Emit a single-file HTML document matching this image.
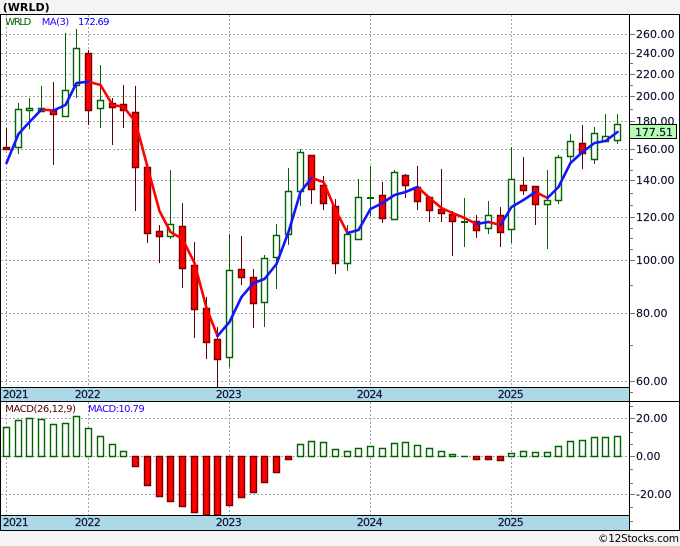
<!DOCTYPE html>
<html><head><meta charset="utf-8"><title>WRLD</title>
<style>
html,body{margin:0;padding:0;background:#f4f4f4;width:680px;height:546px;overflow:hidden}
svg{display:block}
text{font-family:"DejaVu Sans","Liberation Sans",sans-serif;font-size:11px;fill:#0b1030;stroke:#0b1030;stroke-width:.15}
</style></head><body>
<svg width="680" height="546" viewBox="0 0 680 546" xmlns="http://www.w3.org/2000/svg">
<rect x="0" y="0" width="680" height="546" fill="#f4f4f4"/>
<rect x="0.5" y="14.5" width="679" height="516" fill="#fff"/>
<rect x="1" y="388" width="628" height="13" fill="#add8e6"/>
<rect x="1" y="516" width="628" height="14" fill="#add8e6"/>
<g shape-rendering="crispEdges">
<path fill="none" stroke="#a4a4a4" stroke-width="1" stroke-dasharray="2 2" d="M1 34.5H629M1 53.5H629M1 74.5H629M1 96.5H629M1 121.5H629M1 149.5H629M1 180.5H629M1 217.5H629M1 260.5H629M1 313.5H629M1 381.5H629M1 418.5H629M1 456.5H629M1 494.5H629M6.5 15V387M88.5 15V387M229.5 15V387M370.5 15V387M511.5 15V387M6.5 402V515M88.5 402V515M229.5 402V515M370.5 402V515M511.5 402V515"/>
<path fill="none" stroke="#777" stroke-width="1" d="M630 34.5H635M630 53.5H635M630 74.5H635M630 96.5H635M630 121.5H635M630 149.5H635M630 180.5H635M630 217.5H635M630 260.5H635M630 313.5H635M630 381.5H635M630 63.5H633M630 85.5H633M630 109.5H633M630 135.5H633M630 159.5H633M630 170.5H633M630 193.5H633M630 205.5H633M630 228.5H633M630 238.5H633M630 249.5H633M630 285.5H633M630 345.5H633M630 392.5H633M630 406.5H633M630 418.5H635M630 432.5H633M630 444.5H633M630 456.5H635M630 469.5H633M630 483.5H633M630 494.5H635M630 507.5H633M630 521.5H633"/>
<!-- green wicks -->
<path fill="none" stroke="#006400" d="M18.5 103V154M29.5 98V129M41.5 86V111M65.5 33V116M76.5 29V98M100.5 65V128M170.5 170V239M229.5 234V367M264.5 255V327M276.5 224V289M288.5 168V245M300.5 149V206M347.5 225V271M358.5 179V239M370.5 166V216M394.5 170V219M464.5 198V247M488.5 201V234M511.5 147V243M547.5 170V249M558.5 155V204M570.5 134V163M594.5 127V164M605.5 114V141M617.5 114V144"/>
<!-- red wicks -->
<path fill="none" stroke="#5a0000" d="M6.5 128V150M53.5 82V165M88.5 50V125M112.5 98V145M123.5 85V128M135.5 86V211M147.5 167V243M159.5 225V263M182.5 203V288M194.5 242V338M206.5 297V359M217.5 327V387M241.5 236V285M253.5 269V328M311.5 155V204M323.5 176V210M335.5 199V274M382.5 182V223M405.5 174V198M417.5 166V210M429.5 196V222M441.5 169V222M452.5 211V256M476.5 215V238M500.5 207V247M523.5 157V195M535.5 186V225M582.5 125V169"/>
</g>
<g stroke-width="1.4">
<!-- green bodies -->
<path fill="#fff" stroke="#006400" d="M15.5 109.5h6v38h-6zM26.5 108.5h6v2h-6zM38.5 108.5h6v3h-6zM62.5 90.5h6v26h-6zM73.5 48.5h6v37h-6zM97.5 100.5h6v8h-6zM167.5 224.5h6v12h-6zM226.5 270.5h6v87h-6zM261.5 258.5h6v44h-6zM273.5 235.5h6v22h-6zM285.5 191.5h6v43h-6zM297.5 152.5h6v39h-6zM344.5 234.5h6v29h-6zM355.5 197.5h6v42h-6zM391.5 172.5h6v47h-6zM485.5 215.5h6v13h-6zM508.5 179.5h6v50h-6zM544.5 200.5h6v4h-6zM555.5 157.5h6v43h-6zM567.5 141.5h6v15h-6zM591.5 133.5h6v26h-6zM602.5 136.5h6v5h-6zM614.5 124.5h6v16h-6z"/>
<path fill="#006400" stroke="none" d="M367 197h7v2h-7zM461 221h7v2h-7z"/>
<!-- red bodies -->
<path fill="#f00" stroke="#7a0000" d="M3.5 147.5h6v2h-6zM50.5 110.5h6v4h-6zM85.5 53.5h6v57h-6zM109.5 103.5h6v4h-6zM120.5 104.5h6v6h-6zM132.5 112.5h6v55h-6zM144.5 167.5h6v66h-6zM156.5 231.5h6v5h-6zM179.5 226.5h6v42h-6zM191.5 265.5h6v44h-6zM203.5 308.5h6v34h-6zM214.5 339.5h6v20h-6zM238.5 269.5h6v8h-6zM250.5 277.5h6v26h-6zM308.5 155.5h6v34h-6zM320.5 185.5h6v18h-6zM332.5 206.5h6v57h-6zM379.5 195.5h6v23h-6zM402.5 175.5h6v10h-6zM414.5 187.5h6v14h-6zM426.5 197.5h6v13h-6zM438.5 209.5h6v4h-6zM449.5 214.5h6v7h-6zM473.5 221.5h6v9h-6zM497.5 215.5h6v17h-6zM520.5 185.5h6v5h-6zM532.5 186.5h6v18h-6zM579.5 143.5h6v10h-6z"/>
<!-- MACD green -->
<path fill="#fff" stroke="#006400" d="M3.5 427.5h6V456.5h-6zM15.5 420.5h6V456.5h-6zM26.5 418.5h6V456.5h-6zM38.5 419.5h6V456.5h-6zM50.5 424.5h6V456.5h-6zM62.5 423.5h6V456.5h-6zM73.5 416.5h6V456.5h-6zM85.5 428.5h6V456.5h-6zM97.5 436.5h6V456.5h-6zM109.5 444.5h6V456.5h-6zM120.5 451.5h6V456.5h-6zM297.5 444.5h6V456.5h-6zM308.5 441.5h6V456.5h-6zM320.5 442.5h6V456.5h-6zM332.5 449.5h6V456.5h-6zM344.5 451.5h6V456.5h-6zM355.5 448.5h6V456.5h-6zM367.5 446.5h6V456.5h-6zM379.5 448.5h6V456.5h-6zM391.5 443.5h6V456.5h-6zM402.5 442.5h6V456.5h-6zM414.5 445.5h6V456.5h-6zM426.5 448.5h6V456.5h-6zM438.5 451.5h6V456.5h-6zM449.5 454.5h6V456.5h-6zM461 456.5h7M508.5 453.5h6V456.5h-6zM520.5 451.5h6V456.5h-6zM532.5 452.5h6V456.5h-6zM544.5 452.5h6V456.5h-6zM555.5 446.5h6V456.5h-6zM567.5 441.5h6V456.5h-6zM579.5 440.5h6V456.5h-6zM591.5 437.5h6V456.5h-6zM602.5 437.5h6V456.5h-6zM614.5 436.5h6V456.5h-6z"/>
<!-- MACD red -->
<path fill="#f00" stroke="#7a0000" d="M132.5 456.5h6V466.5h-6zM144.5 456.5h6V485.5h-6zM156.5 456.5h6V496.5h-6zM167.5 456.5h6V501.5h-6zM179.5 456.5h6V506.5h-6zM191.5 456.5h6V512.5h-6zM203.5 456.5h6V515h-6zM214.5 456.5h6V515h-6zM226.5 456.5h6V505.5h-6zM238.5 456.5h6V497.5h-6zM250.5 456.5h6V492.5h-6zM261.5 456.5h6V482.5h-6zM273.5 456.5h6V472.5h-6zM285.5 456.5h6V459.5h-6zM473.5 456.5h6V459.5h-6zM485.5 456.5h6V459.5h-6zM497.5 456.5h6V460.5h-6z"/>
</g>
<!-- MA line -->
<g fill="none" stroke-width="2.6" stroke-linejoin="round" stroke-linecap="round">
<path stroke="#f00" d="M41.5 109.5L53.5 110.5"/>
<path stroke="#f00" d="M88.5 81.7L100.5 85L112.5 105L123.5 106.7L135.5 122L147.5 167L159.5 211L170.5 232L182.5 239L194.5 263L206.5 308L217.5 336"/>
<path stroke="#f00" d="M311.5 178L323.5 182L335.5 210L347.5 233"/>
<path stroke="#f00" d="M417.5 187L429.5 198L441.5 208L452.5 213L464.5 218L476.5 224"/>
<path stroke="#f00" d="M488.5 222L500.5 225"/>
<path stroke="#f00" d="M535.5 192L547.5 198"/>
<path stroke="#1414ff" d="M6.5 163L18.5 134L29.5 122L41.5 109.5"/>
<path stroke="#1414ff" d="M53.5 110.5L65.5 105L76.5 83L88.5 81.7"/>
<path stroke="#1414ff" d="M217.5 336L229.5 322L241.5 297L253.5 283L264.5 279L276.5 264L288.5 232L300.5 192L311.5 178"/>
<path stroke="#1414ff" d="M347.5 233L358.5 230L370.5 209L382.5 203L394.5 195L405.5 192L417.5 187"/>
<path stroke="#1414ff" d="M476.5 224L488.5 222"/>
<path stroke="#1414ff" d="M500.5 225L511.5 207L523.5 200L535.5 192"/>
<path stroke="#1414ff" d="M547.5 198L558.5 187L570.5 163L582.5 152L594.5 143L605.5 141L617.5 132"/>
</g>
<g shape-rendering="crispEdges" fill="#000">
<rect x="0" y="14" width="680" height="1"/>
<rect x="0" y="14" width="1" height="517"/>
<rect x="679" y="14" width="1" height="517"/>
<rect x="0" y="530" width="680" height="1"/>
<rect x="629" y="14" width="1" height="517"/>
<rect x="0" y="387" width="629" height="1"/>
<rect x="0" y="401" width="680" height="1"/>
<rect x="0" y="515" width="629" height="1"/>
</g>
<!-- axis labels -->
<text x="636" y="38">260.00</text>
<text x="636" y="57">240.00</text>
<text x="636" y="78">220.00</text>
<text x="636" y="100">200.00</text>
<text x="636" y="125">180.00</text>
<text x="636" y="153">160.00</text>
<text x="636" y="184">140.00</text>
<text x="636" y="221">120.00</text>
<text x="636" y="264">100.00</text>
<text x="636" y="317">80.00</text>
<text x="636" y="385">60.00</text>
<text x="636" y="422">20.00</text>
<text x="636" y="460">0.00</text>
<text x="636" y="498">-20.00</text>
<rect x="629.5" y="124.5" width="47" height="14" fill="#b6fdb0" stroke="#000" shape-rendering="crispEdges"/>
<text x="635" y="136" textLength="38">177.51</text>
<!-- years -->
<text x="2.7" y="398" textLength="26">2021</text>
<text x="74.7" y="398" textLength="26">2022</text>
<text x="215.7" y="398" textLength="26">2023</text>
<text x="356.7" y="398" textLength="26">2024</text>
<text x="497.7" y="398" textLength="26">2025</text>
<text x="2.7" y="526" textLength="26">2021</text>
<text x="74.7" y="526" textLength="26">2022</text>
<text x="215.7" y="526" textLength="26">2023</text>
<text x="356.7" y="526" textLength="26">2024</text>
<text x="497.7" y="526" textLength="26">2025</text>
<!-- legends -->
<text x="5.3" y="25" textLength="26" style="font-size:10px;fill:#006400;stroke:none">WRLD</text>
<text x="41.7" y="25" textLength="27.5" style="font-size:10px;fill:#2a00ff;stroke:none">MA(3)</text>
<text x="78" y="25" textLength="31.5" style="font-size:10px;fill:#0000ff;stroke:none">172.69</text>
<text x="5.3" y="412" textLength="70.7" style="font-size:10px;fill:#4a0000;stroke:none">MACD(26,12,9)</text>
<text x="88" y="412" textLength="56.7" style="font-size:10px;fill:#2a00ff;stroke:none">MACD:10.79</text>
<!-- title/footer -->
<text x="2.7" y="11" textLength="47" style="font-size:11px;font-weight:bold;fill:#000;stroke:none">(WRLD)</text>
<text x="598" y="542" textLength="81" style="font-size:10.5px;fill:#000;stroke:none">©12Stocks.com</text>
</svg>
</body></html>
